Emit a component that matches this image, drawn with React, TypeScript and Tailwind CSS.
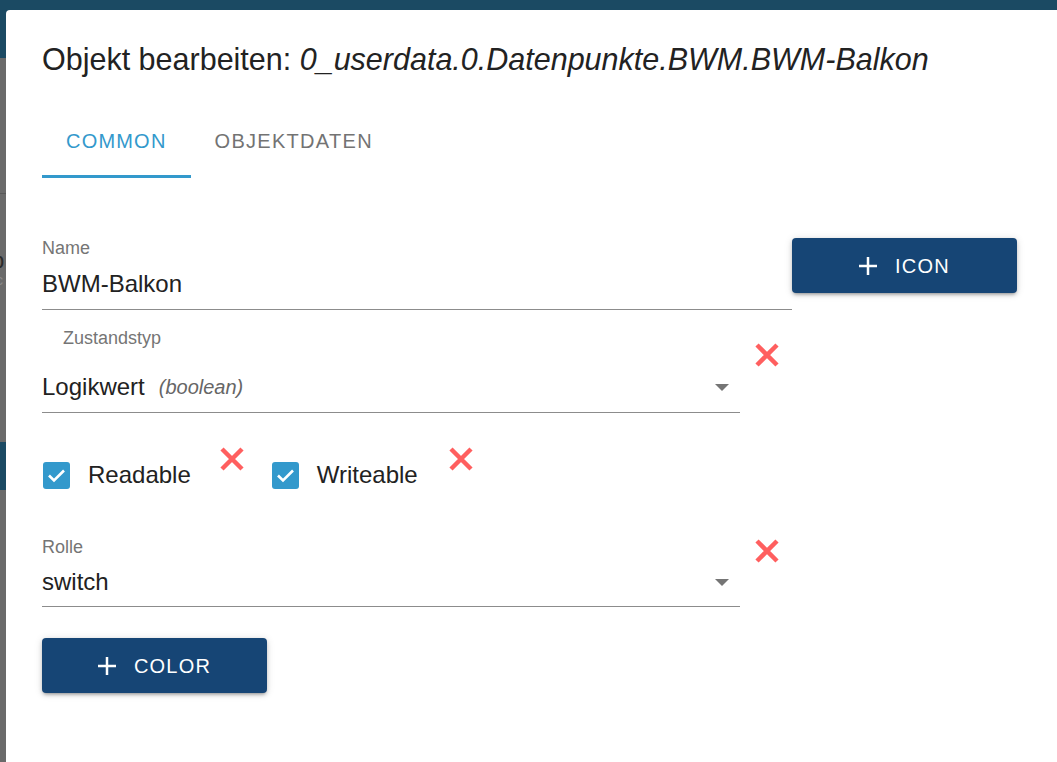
import React from "react";

// red "x" shown next to fields that can be reset
const ResetX = ({ className = "" }: { className?: string }) => (
  <svg width="26" height="26" viewBox="0 0 26 26" className={className}>
    <path d="M3 3 L23 23 M23 3 L3 23" stroke="#ff5f5f" strokeWidth="4.5" />
  </svg>
);

const Plus = () => (
  <svg width="18" height="18" viewBox="0 0 18 18">
    <path d="M9 0 V18 M0 9 H18" stroke="#ffffff" strokeWidth="2.5" />
  </svg>
);

const DropArrow = () => (
  <svg width="14" height="7" viewBox="0 0 14 7" className="mr-[11px]">
    <path d="M0 0 L14 0 L7 7 Z" fill="#757575" />
  </svg>
);

const Checkbox = () => (
  <div className="w-[27px] h-[27px] rounded-[3px] bg-[#3399cc] flex items-center justify-center">
    <svg width="19" height="15" viewBox="0 0 19 15">
      <path d="M2 7.5 L7 12.5 L17 2.5" fill="none" stroke="#ffffff" strokeWidth="2.6" />
    </svg>
  </div>
);

const ActionButton = ({ label }: { label: string }) => (
  <button className="w-[225px] h-[55px] rounded-[4px] bg-[#164575] text-white flex items-center justify-center gap-[18px] shadow-[0_3px_3px_-2px_rgba(0,0,0,0.25),0_2px_4px_0_rgba(0,0,0,0.16),0_1px_8px_0_rgba(0,0,0,0.12)]">
    <Plus />
    <span className="text-[20px] leading-[24px] tracking-[1.2px]">{label}</span>
  </button>
);

export default function App() {
  return (
    <div className="relative w-[1057px] h-[762px] overflow-hidden bg-[#6a6a6a] font-['Liberation_Sans',Arial,sans-serif]">
      {/* page behind the dialog */}
      <div className="flex flex-col">
        <div className="h-[58px] bg-[#1b4a63]" />
        <div className="h-[135px]" />
        <div className="h-px bg-[#585858]" />
        <div className="h-[56px]" />
        <div className="text-[22px] leading-[22px] text-[#2a2a2a] -ml-[8px]">b</div>
        <div className="text-[14px] leading-[16px] text-[#8a8a8a] -ml-[4px]">c</div>
        <div className="h-[154px]" />
        <div className="h-[48px] bg-[#1b4a63]" />
      </div>

      {/* dialog */}
      <div className="absolute left-[6px] top-[10px] w-[1100px] h-[800px] bg-white rounded-[4px] pl-[36px] text-[#222222]">
        <h2 className="mt-[31px] text-[30.5px] leading-[36px] whitespace-nowrap">
          Objekt bearbeiten: <i>0_userdata.0.Datenpunkte.BWM.BWM-Balkon</i>
        </h2>

        <div className="mt-[29px] flex h-[72px]">
          <div className="px-6 flex items-center border-b-[3px] border-[#3399cc] text-[#3399cc] text-[20px] leading-[24px] tracking-[1.2px]">
            COMMON
          </div>
          <div className="px-6 flex items-center pb-[3px] text-[#737373] text-[20px] leading-[24px] tracking-[1.3px]">
            OBJEKTDATEN
          </div>
        </div>

        {/* Name + icon button */}
        <div className="mt-[59px] flex items-start">
          <div className="w-[750px] border-b border-[#8c8c8c] pb-[10px]">
            <div className="text-[18px] leading-[22px] text-[#757575]">Name</div>
            <div className="mt-[10px] text-[24px] leading-[30px]">BWM-Balkon</div>
          </div>
          <div className="mt-[1px]">
            <ActionButton label="ICON" />
          </div>
        </div>

        {/* Zustandstyp */}
        <div className="flex items-start">
          <div className="w-[698px] mt-[17px] border-b border-[#8c8c8c] pb-[10px]">
            <div className="pl-[21px] text-[18px] leading-[22px] text-[#757575]">Zustandstyp</div>
            <div className="mt-[23px] flex items-center">
              <span className="text-[24px] leading-[30px]">Logikwert</span>
              <i className="ml-3.5 text-[20px] leading-[30px] text-[#666666]">(boolean)</i>
              <span className="ml-auto">
                <DropArrow />
              </span>
            </div>
          </div>
          <ResetX className="ml-[14px] mt-[32px]" />
        </div>

        {/* Readable / Writeable */}
        <div className="mt-[33px] h-[44px] flex items-start">
          <div className="mt-[16px] ml-[1px]">
            <Checkbox />
          </div>
          <span className="ml-[18px] mt-[14px] text-[24px] leading-[30px]">Readable</span>
          <ResetX className="ml-[28px]" />
          <div className="mt-[16px] ml-[27px]">
            <Checkbox />
          </div>
          <span className="ml-[18px] mt-[14px] text-[24px] leading-[30px]">Writeable</span>
          <ResetX className="ml-[30px]" />
        </div>

        {/* Rolle */}
        <div className="mt-[46px] flex items-start">
          <div className="w-[698px] border-b border-[#8c8c8c] pb-[9px]">
            <div className="text-[18px] leading-[22px] text-[#757575]">Rolle</div>
            <div className="mt-[9px] flex items-center">
              <span className="text-[24px] leading-[30px]">switch</span>
              <span className="ml-auto">
                <DropArrow />
              </span>
            </div>
          </div>
          <ResetX className="ml-[14px] mt-[2px]" />
        </div>

        <div className="mt-[31px]">
          <ActionButton label="COLOR" />
        </div>
      </div>
    </div>
  );
}
